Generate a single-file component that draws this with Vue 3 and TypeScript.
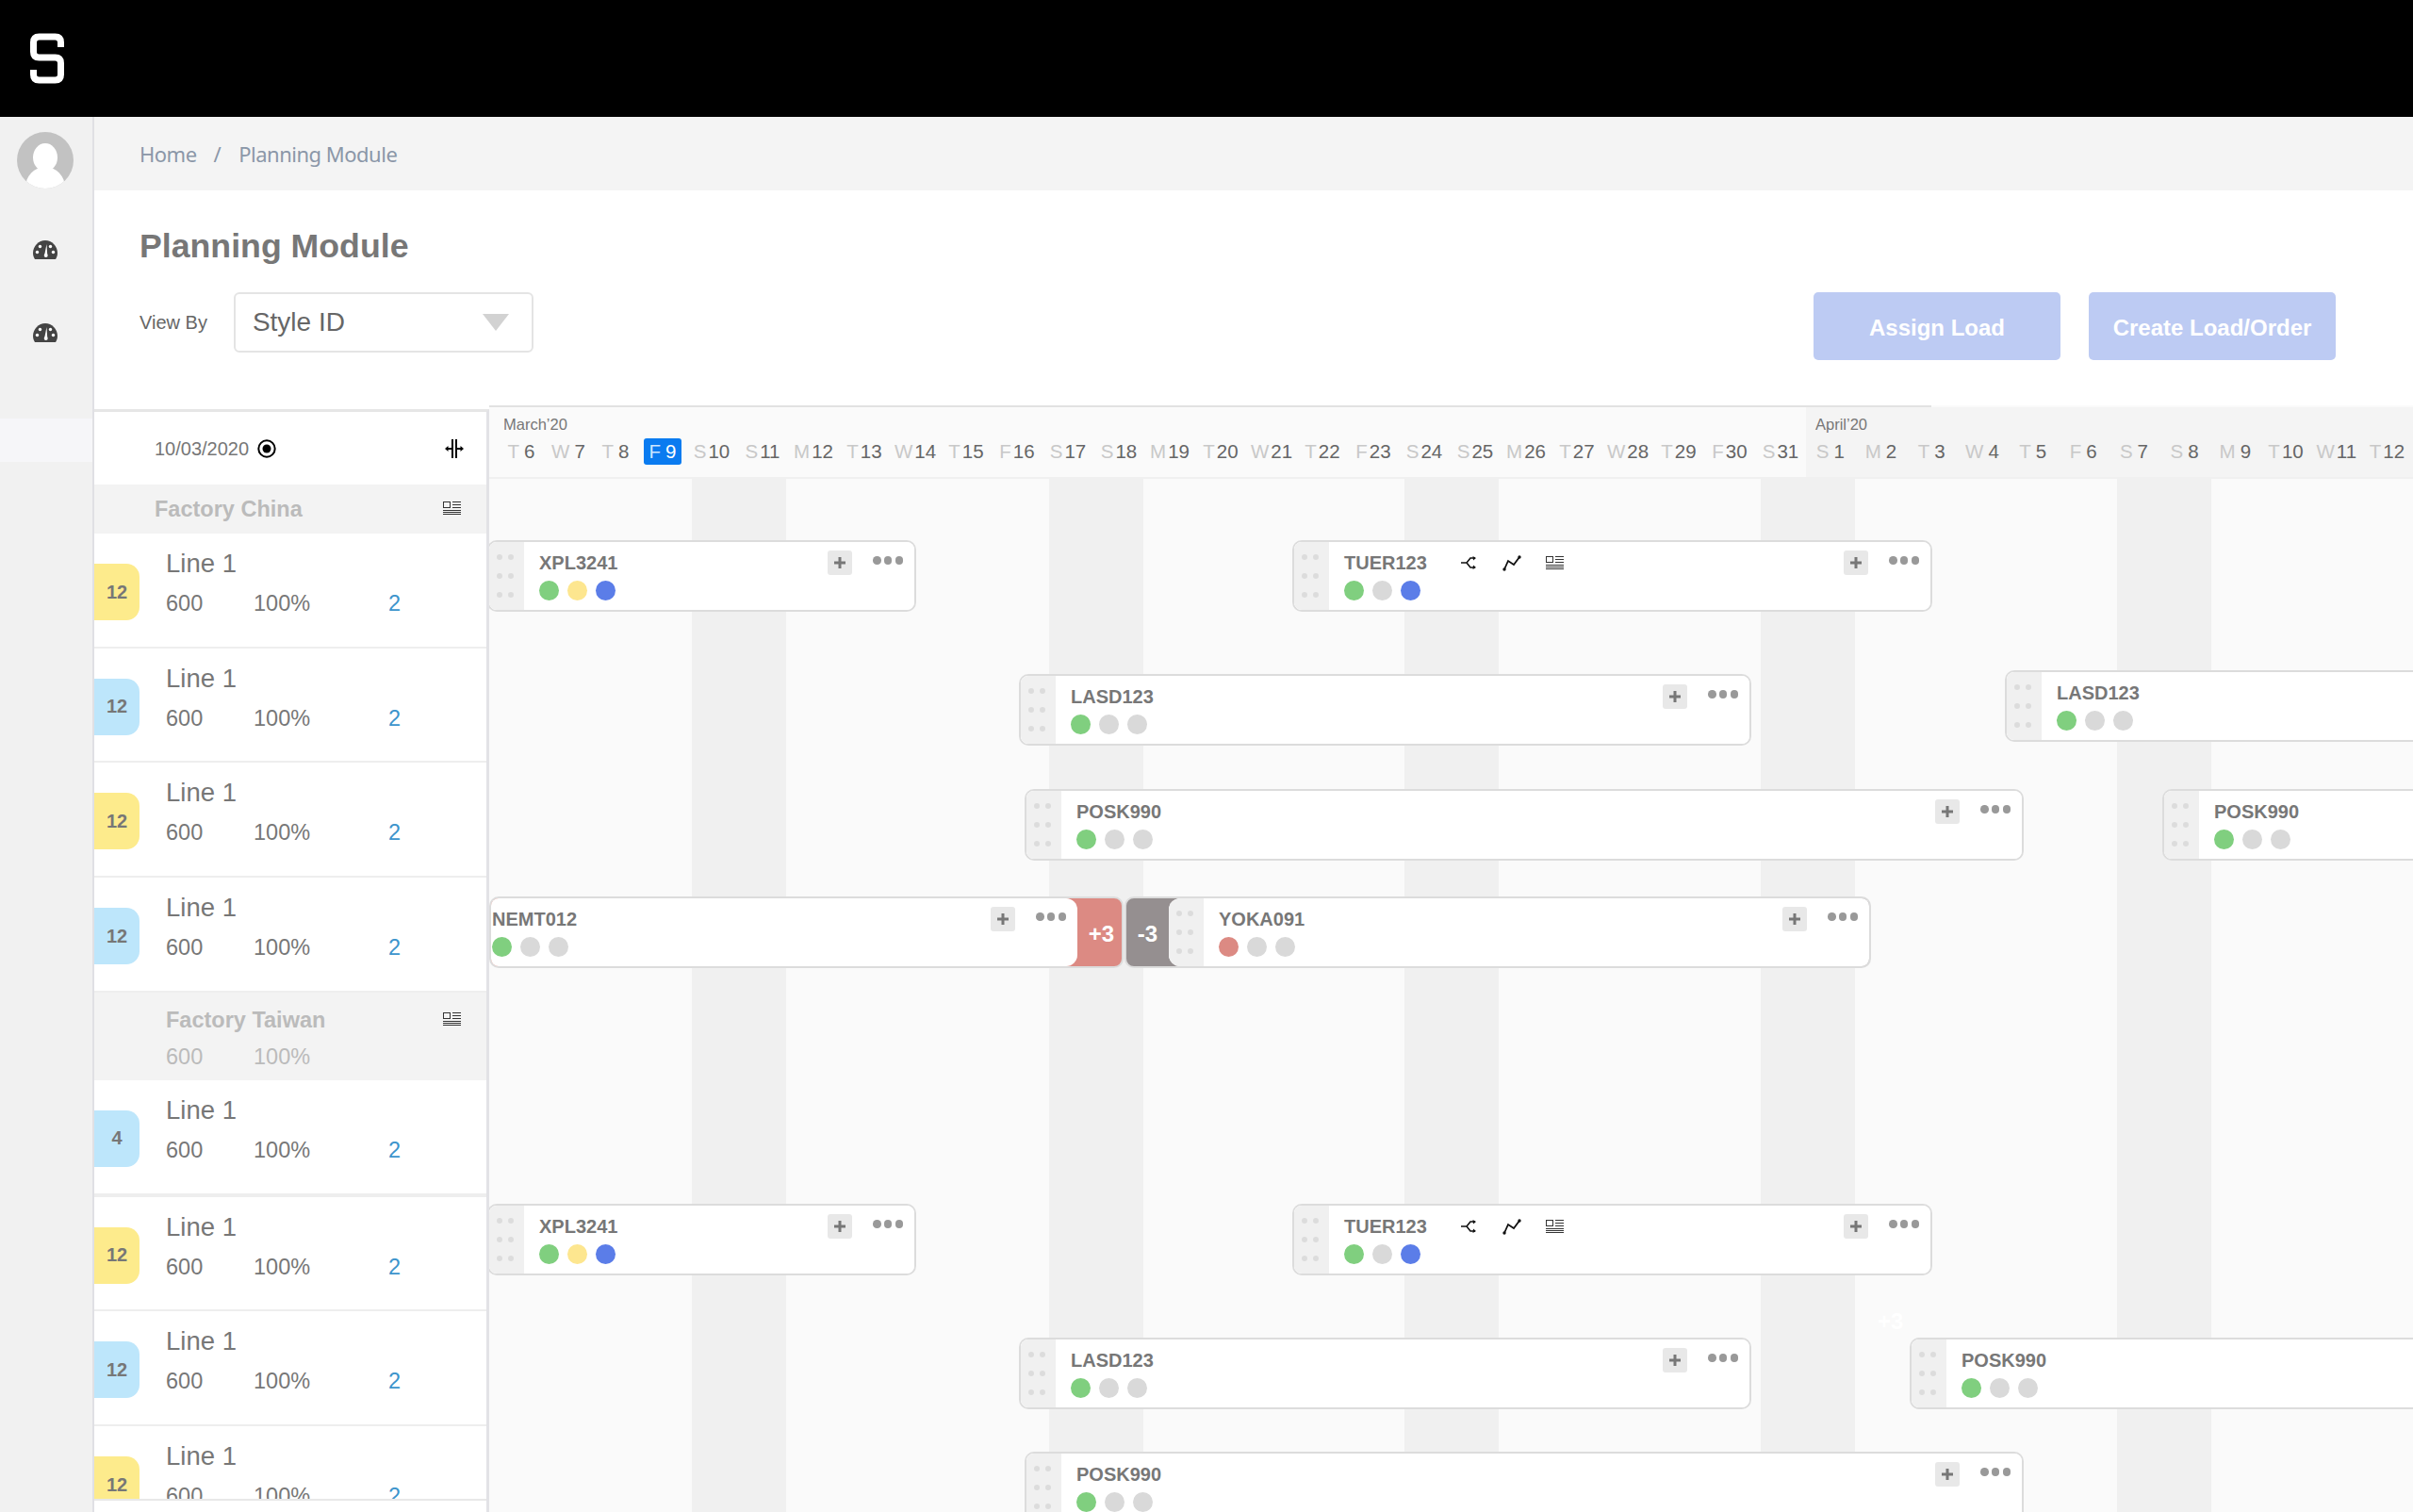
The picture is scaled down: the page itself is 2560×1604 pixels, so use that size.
<template>
  <div class="page">
    <header class="topbar">
      <svg class="logo" width="38" height="54" viewBox="0 0 38 54" fill="none">
        <path d="M33.5 15V10Q33.5 4 27.5 4H10.5Q4.5 4 4.5 10V20Q4.5 26 10.5 26H27.5Q33.5 26 33.5 32V44Q33.5 50 27.5 50H10.5Q4.5 50 4.5 44V39" stroke="#fff" stroke-width="7" />
      </svg>
    </header>

    <div class="body">
      <aside class="sidebar">
        <svg class="avatar" width="60" height="60" viewBox="0 0 60 60">
          <defs>
            <clipPath id="avatar-clip"><circle cx="30" cy="30" r="30" /></clipPath>
          </defs>
          <g clip-path="url(#avatar-clip)">
            <rect width="60" height="60" fill="#c2c2c2" />
            <ellipse cx="30" cy="27" rx="13" ry="15" fill="#fff" />
            <ellipse cx="30" cy="59" rx="21" ry="22" fill="#fff" />
          </g>
        </svg>
        <svg v-for="n in 2" :key="n" class="gauge" width="26" height="20" viewBox="0 0 26 20">
          <path d="M13 0C6 0 0 6 0 13.500C0 16 .8 18.300 2 20H24C25.200 18.300 26 16 26 13.500C26 6 20 0 13 0Z" fill="#444" />
          <circle cx="4.500" cy="12.500" r="1.700" fill="#fff" />
          <circle cx="7.500" cy="6.500" r="1.700" fill="#fff" />
          <circle cx="18.500" cy="6.500" r="1.700" fill="#fff" />
          <circle cx="21.500" cy="12.500" r="1.700" fill="#fff" />
          <path d="M14.500 4L12.200 15.500H15.200Z" fill="#fff" />
          <circle cx="13.700" cy="16" r="2" fill="#fff" />
        </svg>
        <div class="side-band"></div>
      </aside>

      <main class="main">
        <nav class="crumbs">
          <span>Home</span>
          <span class="slash">/</span>
          <span>Planning Module</span>
        </nav>

        <section class="head">
          <h1>Planning Module</h1>
          <div class="toolbar">
            <label class="view-label">View By</label>
            <div class="select">
              <span>Style ID</span>
              <i class="caret"></i>
            </div>
            <button class="btn first">Assign Load</button>
            <button class="btn">Create Load/Order</button>
          </div>
        </section>

        <section class="planner">
          <div class="list">
            <div class="list-head">
              <span class="date">10/03/2020</span>
              <svg class="target" width="20" height="20" viewBox="0 0 20 20">
                <circle cx="10" cy="10" r="8.700" fill="none" stroke="#000" stroke-width="2" />
                <circle cx="10" cy="10" r="4.500" fill="#000" />
              </svg>
              <svg class="split" width="20" height="20" viewBox="0 0 20 20">
                <path d="M8 0V20M12 0V20M2 10H7M13 10H18" stroke="#000" stroke-width="2" fill="none" />
                <path d="M0 10L3.500 7V13ZM20 10L16.500 7V13Z" fill="#000" />
              </svg>
            </div>
            <div class="rows">
              <template v-for="group in groups" :key="group.name">
                <div class="factory" :class="{ tall: group.total }">
                  <div>
                    <div class="factory-name">{{ group.name }}</div>
                    <div v-if="group.total" class="nums muted">
                      <span class="qty">600</span><span class="pct">100%</span>
                    </div>
                  </div>
                  <svg class="list-icon" width="19" height="15" viewBox="0 0 19 15" fill="none" stroke="#333" stroke-width="1">
                    <rect x=".5" y=".5" width="7" height="6" />
                    <path d="M10 .5H19M10 3.500H19M10 6.500H19M0 9.500H19M0 11.500H19M0 13.500H19" />
                  </svg>
                </div>
                <div v-for="(row, i) in group.rows" :key="i" class="row" :class="{ thick: group.total && i === 0 }">
                  <div class="badge" :class="row.tone">{{ row.count }}</div>
                  <div class="row-text">
                    <div class="line-name">Line 1</div>
                    <div class="nums">
                      <span class="qty">600</span><span class="pct">100%</span><span class="link">2</span>
                    </div>
                  </div>
                </div>
              </template>
            </div>
          </div>

          <div class="gantt">
            <div class="top-rule"></div>
            <div class="calendar">
              <div class="month march">
                <div class="month-name">March’20</div>
                <div class="days">
                  <div v-for="d in march" :key="d.num" class="day" :class="{ tight: d.num < 10 }">
                    <span class="day-text" :class="{ today: d.num === 9 }">
                      <span class="letter">{{ d.letter }}</span><span class="num" :class="{ one: d.num < 10 }">{{ d.num }}</span>
                    </span>
                  </div>
                </div>
              </div>
              <div class="month april">
                <div class="month-name">April’20</div>
                <div class="days">
                  <div v-for="d in april" :key="d.num" class="day">
                    <span class="day-text">
                      <span class="letter">{{ d.letter }}</span><span class="num" :class="{ one: d.num < 10 }">{{ d.num }}</span>
                    </span>
                  </div>
                </div>
              </div>
            </div>

            <div class="canvas">
              <div v-for="left in stripes" :key="left" class="stripe" :style="{ left: left + 'px' }"></div>

              <!-- leftover tag, white on the grid -->
              <span class="ghost-tag">+3</span>

              <div
                v-for="(bar, i) in bars"
                :key="i"
                class="bar"
                :class="bar.under ? 'under' : bar.over ? 'over' : ''"
                :style="{ left: bar.x + 'px', top: bar.y + 'px', width: bar.w + 'px' }"
              >
                <div v-if="bar.under" class="tail tail-under">{{ bar.under }}</div>
                <div class="bar-main">
                  <div v-if="!bar.noHandle" class="handle">
                    <i v-for="n in 6" :key="n"></i>
                  </div>
                  <div class="bar-info" :class="{ flush: bar.noHandle }">
                    <div class="bar-title">
                      <span class="bar-name">{{ bar.name }}</span>
                      <span v-if="bar.tools" class="tools">
                        <svg width="18" height="14" viewBox="0 0 18 14" fill="none" stroke="#111" stroke-width="1.600">
                          <path d="M0 7H6L10 2H15M6 7L10 12H15" />
                          <path d="M12.500 0L16 2L13 4.500ZM12.500 14L16 12L13 9.500Z" fill="#111" stroke="none" />
                        </svg>
                        <svg width="20" height="17" viewBox="0 0 20 17" fill="none" stroke="#111" stroke-width="1.800">
                          <path d="M2 15L6 6L12 10L18 2" />
                          <circle cx="2" cy="15" r="1.700" fill="#111" stroke="none" />
                          <circle cx="18" cy="2" r="1.700" fill="#111" stroke="none" />
                        </svg>
                        <svg width="19" height="15" viewBox="0 0 19 15" fill="none" stroke="#333" stroke-width="1">
                          <rect x=".5" y=".5" width="7" height="6" />
                          <path d="M10 .5H19M10 3.500H19M10 6.500H19M0 9.500H19M0 11.500H19M0 13.500H19" />
                        </svg>
                      </span>
                    </div>
                    <div class="status">
                      <i v-for="(c, n) in bar.dots" :key="n" :class="c"></i>
                    </div>
                  </div>
                  <div class="plus">
                    <svg width="14" height="14" viewBox="0 0 14 14"><path d="M7 1V13M1 7H13" stroke="#777" stroke-width="3" /></svg>
                  </div>
                  <div class="more"><i></i><i></i><i></i></div>
                </div>
                <div v-if="bar.over" class="tail tail-over">{{ bar.over }}</div>
              </div>
            </div>
          </div>
        </section>
      </main>
    </div>
  </div>
</template>

<script setup lang="ts">
interface Row {
  count: number
  tone: 'yellow' | 'blue'
}

interface Group {
  name: string
  total?: boolean
  rows: Row[]
}

interface Bar {
  name: string
  x: number
  y: number
  w: number
  dots: string[]
  tools?: boolean
  noHandle?: boolean
  over?: string
  under?: string
}

const letters = ['M', 'T', 'W', 'T', 'F', 'S', 'S']

function daysFrom(start: number, end: number, offset: number) {
  const out: { num: number; letter: string }[] = []
  for (let num = start; num <= end; num++) {
    out.push({ num, letter: letters[(num + offset) % 7] })
  }
  return out
}

// offsets put M12 and M2 on the Monday slot
const march = daysFrom(6, 31, 2)
const april = daysFrom(1, 12, 5)

const stripes = [215, 594, 971, 1349, 1727]

const groups: Group[] = [
  {
    name: 'Factory China',
    rows: [
      { count: 12, tone: 'yellow' },
      { count: 12, tone: 'blue' },
      { count: 12, tone: 'yellow' },
      { count: 12, tone: 'blue' }
    ]
  },
  {
    name: 'Factory Taiwan',
    total: true,
    rows: [
      { count: 4, tone: 'blue' },
      { count: 12, tone: 'yellow' },
      { count: 12, tone: 'blue' },
      { count: 12, tone: 'yellow' }
    ]
  }
]

const bars: Bar[] = [
  { name: 'XPL3241', x: -2, y: 65, w: 455, dots: ['green', 'yellow', 'blue'] },
  { name: 'TUER123', x: 852, y: 65, w: 679, dots: ['green', 'grey', 'blue'], tools: true },
  { name: 'LASD123', x: 562, y: 207, w: 777, dots: ['green', 'grey', 'grey'] },
  { name: 'LASD123', x: 1608, y: 203, w: 800, dots: ['green', 'grey', 'grey'] },
  { name: 'POSK990', x: 568, y: 329, w: 1060, dots: ['green', 'grey', 'grey'] },
  { name: 'POSK990', x: 1775, y: 329, w: 800, dots: ['green', 'grey', 'grey'] },
  { name: 'NEMT012', x: 0, y: 443, w: 673, dots: ['green', 'grey', 'grey'], noHandle: true, over: '+3' },
  { name: 'YOKA091', x: 674, y: 443, w: 792, dots: ['red', 'grey', 'grey'], under: '-3' },
  { name: 'XPL3241', x: -2, y: 769, w: 455, dots: ['green', 'yellow', 'blue'] },
  { name: 'TUER123', x: 852, y: 769, w: 679, dots: ['green', 'grey', 'blue'], tools: true },
  { name: 'LASD123', x: 562, y: 911, w: 777, dots: ['green', 'grey', 'grey'] },
  { name: 'POSK990', x: 1507, y: 911, w: 1000, dots: ['green', 'grey', 'grey'] },
  { name: 'POSK990', x: 568, y: 1032, w: 1060, dots: ['green', 'grey', 'grey'] }
]
</script>

<style>
html,
body {
  margin: 0;
  background: #fff;
}
</style>

<style scoped>
.page {
  width: 2560px;
  height: 1604px;
  display: flex;
  flex-direction: column;
  overflow: hidden;
  font-family: "Liberation Sans", Arial, sans-serif;
  color: #777;
}

.topbar {
  height: 124px;
  flex: none;
  background: #000;
  display: flex;
  align-items: center;
  padding-left: 31px;
}

.body {
  flex: 1;
  display: flex;
  min-height: 0;
}

.sidebar {
  width: 100px;
  flex: none;
  box-sizing: border-box;
  background: #f1f1f1;
  border-right: 2px solid #e0e0e4;
  display: flex;
  flex-direction: column;
  align-items: center;
  padding-top: 16px;
}

.avatar {
  margin-left: -2px;
}

.gauge {
  margin-top: 55px;
  margin-left: -3px;
}

.gauge + .gauge {
  margin-top: 68px;
}

.side-band {
  align-self: stretch;
  height: 46px;
  margin-top: 81px;
  background: #f6f6f9;
}

.main {
  flex: 1;
  min-width: 0;
  display: flex;
  flex-direction: column;
}

.crumbs {
  height: 78px;
  flex: none;
  background: #f4f4f4;
  display: flex;
  align-items: center;
  padding-left: 48px;
  font-family: "Noto Sans", sans-serif;
  font-size: 22px;
  letter-spacing: -0.5px;
  color: #8b97a8;
}

.slash {
  margin: 0 19px 0 18px;
}

.head {
  height: 228px;
  flex: none;
  box-sizing: border-box;
  padding: 35px 82px 0 48px;
}

h1 {
  margin: 0;
  font-size: 35.700px;
  line-height: 48px;
  font-weight: bold;
  color: #777;
}

.toolbar {
  display: flex;
  align-items: flex-start;
  margin-top: 25px;
}

.view-label {
  font-size: 20px;
  line-height: 64px;
  color: #666;
}

.select {
  width: 318px;
  height: 64px;
  box-sizing: border-box;
  margin-left: 28px;
  border: 2px solid #e4e4e4;
  border-radius: 6px;
  display: flex;
  align-items: center;
  justify-content: space-between;
  padding: 0 24px 0 18px;
  font-size: 28px;
  color: #666;
}

.caret {
  width: 0;
  height: 0;
  border-left: 14px solid transparent;
  border-right: 14px solid transparent;
  border-top: 18px solid #d2d2d2;
}

.btn {
  width: 262px;
  height: 72px;
  margin-left: 30px;
  padding: 3px 0 0;
  border: none;
  border-radius: 5px;
  background: #bdcbf3;
  color: #fff;
  font-family: inherit;
  font-size: 24px;
  font-weight: bold;
}

.btn.first {
  margin-left: auto;
}

.planner {
  flex: 1;
  display: flex;
  min-height: 0;
}

.list {
  width: 419px;
  flex: none;
  box-sizing: border-box;
  margin-top: 4px;
  border-top: 3px solid #e6e6e6;
  border-right: 3px solid #e2e2e6;
  display: flex;
  flex-direction: column;
  padding-bottom: 12px;
}

.list-head {
  height: 77px;
  flex: none;
  display: flex;
  align-items: center;
  padding: 2px 0 0 64px;
  box-sizing: border-box;
  font-size: 20px;
  color: #777;
}

.target {
  margin-left: 9px;
  margin-top: -2px;
}

.split {
  margin-left: auto;
  margin-right: 24px;
  margin-top: -2px;
}

.rows {
  flex: 1;
  min-height: 0;
  overflow: hidden;
  border-bottom: 2px solid #e8e8e8;
}

.factory {
  height: 52px;
  box-sizing: border-box;
  background: #f3f3f3;
  display: flex;
  justify-content: space-between;
  padding: 12px 27px 0 64px;
  color: #bbb;
}

.factory-name {
  font-size: 23.500px;
  line-height: 28px;
  font-weight: bold;
}

.factory.tall {
  height: 93px;
  padding: 15px 27px 0 76px;
}

.factory.tall .nums {
  margin-top: 11px;
}

.list-icon {
  margin-top: 6px;
}

.row {
  height: 121.700px;
  box-sizing: border-box;
  border-bottom: 2px solid #eee;
  display: flex;
  align-items: flex-start;
}

.row.thick {
  height: 124px;
  border-bottom-width: 4px;
}

.badge {
  width: 48px;
  height: 60px;
  margin-top: 32px;
  flex: none;
  border-radius: 0 14px 14px 0;
  display: flex;
  align-items: center;
  justify-content: center;
  font-size: 20px;
  font-weight: bold;
  color: #777;
}

.badge.yellow {
  background: #fdeb8c;
}

.badge.blue {
  background: #bde6fb;
}

.row-text {
  margin-left: 28px;
  padding-top: 16px;
}

.line-name {
  font-size: 27.500px;
  line-height: 32px;
  color: #777;
}

.nums {
  margin-top: 12px;
  display: flex;
  font-size: 23.500px;
  line-height: 28px;
  color: #777;
}

.nums.muted {
  color: #bbb;
}

.qty {
  width: 93px;
}

.pct {
  width: 143px;
}

.link {
  color: #3c94cc;
}

.gantt {
  flex: 1;
  min-width: 0;
  display: flex;
  flex-direction: column;
  background: #fafafa;
}

.top-rule {
  width: 1530px;
  height: 2px;
  flex: none;
  background: #e2e2e2;
}

.calendar {
  height: 76px;
  flex: none;
  box-sizing: border-box;
  border-bottom: 2px solid #f0f0f0;
  display: flex;
}

.month {
  flex: none;
  box-sizing: border-box;
}

.month-name {
  font-size: 16.500px;
  line-height: 20px;
  padding-top: 8px;
  color: #777;
}

.march {
  width: 1397px;
  padding-left: 15px;
  background: #fafafa;
}

.march .days {
  margin-left: -6px;
}

.april {
  flex: 1;
  padding-left: 10px;
  background: #f4f4f4;
}

.april .days {
  margin-left: -11px;
}

.april .day {
  width: 53.700px;
}

.days {
  display: flex;
  margin-top: 5px;
}

.day {
  width: 54px;
  flex: none;
  display: flex;
  justify-content: center;
  font-size: 20.500px;
  line-height: 28px;
}

.day.tight {
  width: 50px;
}

.april .day.tight {
  width: 53.700px;
}

.day-text {
  display: block;
  white-space: nowrap;
  color: #666;
}

.letter {
  color: #c8c8c8;
}

.num {
  margin-left: 2px;
}

.num.one {
  margin-left: 5px;
}

.today {
  background: #0a7bf0;
  border-radius: 3px;
  padding: 0 6px;
  margin: 0 -6px;
  color: #fff;
}

.today .letter {
  color: #cfe6ff;
}

.canvas {
  flex: 1;
  position: relative;
  overflow: hidden;
}

.stripe {
  position: absolute;
  top: 0;
  bottom: 0;
  width: 100px;
  background: #f0f0f0;
}

.ghost-tag {
  position: absolute;
  left: 1473px;
  top: 880px;
  font-size: 24px;
  font-weight: bold;
  color: #fff;
}

.bar {
  position: absolute;
  height: 76px;
  box-sizing: border-box;
  display: flex;
  border: 2px solid #dcdcdc;
  border-radius: 10px;
  background: #fff;
  overflow: hidden;
}

.bar.over {
  background: #dc8a83;
}

.bar.under {
  background: #958f90;
}

.tail {
  flex: none;
  width: 45px;
  display: flex;
  align-items: center;
  justify-content: center;
  color: #fff;
  font-size: 24px;
  font-weight: bold;
  padding-top: 3px;
  box-sizing: border-box;
}

.tail-over {
  width: 47px;
  padding-left: 4px;
}

.bar-main {
  flex: 1;
  min-width: 0;
  display: flex;
  background: #fff;
}

.bar.over .bar-main {
  border-radius: 0 12px 12px 0;
}

.bar.under .bar-main {
  border-radius: 12px 0 0 12px;
  overflow: hidden;
}

.handle {
  width: 37px;
  flex: none;
  box-sizing: border-box;
  background: #f0f0f0;
  display: grid;
  grid-template-columns: 6px 6px;
  grid-auto-rows: 6px;
  gap: 14px 6px;
  padding: 13px 0 0 8px;
}

.handle i {
  border-radius: 50%;
  background: #dcdcdc;
}

.bar-info {
  flex: 1;
  min-width: 0;
  padding: 10px 0 0 16px;
}

.bar-info.flush {
  padding-left: 1px;
}

.bar-title {
  display: flex;
  align-items: center;
  height: 24px;
}

.bar-name {
  font-size: 20px;
  font-weight: bold;
  color: #777;
}

.tools {
  display: flex;
  align-items: center;
  gap: 26px;
  margin-left: 36px;
}

.status {
  display: flex;
  gap: 9px;
  margin-top: 7px;
}

.status i {
  width: 21px;
  height: 21px;
  border-radius: 50%;
}

.status .green {
  background: #80cf7f;
}

.status .yellow {
  background: #fde68f;
}

.status .blue {
  background: #5b7de8;
}

.status .grey {
  background: #d9d9d9;
}

.status .red {
  background: #dc8a83;
}

.plus {
  width: 26px;
  height: 26px;
  flex: none;
  margin-top: 9px;
  border-radius: 3px;
  background: #e8e8e8;
  display: flex;
  align-items: center;
  justify-content: center;
}

.more {
  width: 32px;
  height: 10px;
  flex: none;
  margin: 15px 12px 0 22px;
  display: flex;
  justify-content: space-between;
}

.more i {
  width: 8.500px;
  height: 8.500px;
  border-radius: 50%;
  background: #999;
}
</style>
